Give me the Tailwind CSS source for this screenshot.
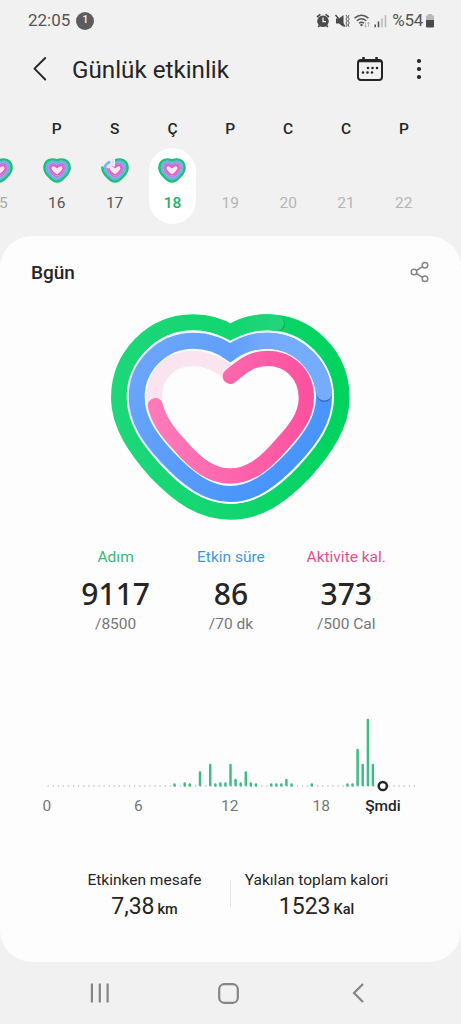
<!DOCTYPE html>
<html lang="tr">
<head>
<meta charset="utf-8">
<title>Günlük etkinlik</title>
<script src="https://cdn.jsdelivr.net/npm/@tailwindcss/browser@4"></script>
</head>
<body class="w-[461px] h-[1024px] overflow-hidden bg-[#f1f1f1] font-['Roboto',sans-serif] text-[#252525] flex flex-col">
<svg class="hidden">
  <symbol id="mini" viewBox="0 0 84 75">
    <path d="M42 7.500C37 5 31 4.500 27 4.500C13 4.500 4.500 16 4.500 29C4.500 40 10 47 17 54C26 64 34 70.500 42 70.500C50 70.500 58 64 67 54C74 47 79.500 40 79.500 29C79.500 16 71 4.500 57 4.500C53 4.500 47 5 42 7.500Z" fill="#fce9f5" stroke="#1cc077" stroke-width="8"/>
    <path d="M42 15C37 12 32 11 28 11C18 11 11.500 20 11.500 29.500C11.500 38 16 44 22 50C29 58 36 63.500 42 63.500C48 63.500 55 58 62 50C68 44 72.500 38 72.500 29.500C72.500 20 66 11 56 11C52 11 47 12 42 15Z" fill="none" stroke="#6fb0e4" stroke-width="7"/>
    <path d="M42 23C38 19 34 17 30 17C22 17 18 23 18 30C18 37 22 42 27 47C33 53 37 57 42 57C47 57 51 53 57 47C62 42 66 37 66 30C66 23 62 17 54 17C50 17 46 19 42 23Z" fill="none" stroke="#b383dc" stroke-width="6"/>
    <path d="M42 28C38 24 35 22 31 22C26 22 23 26 23 31C23 36 27 40 31 44C36 49 39 51 42 51C45 51 48 49 53 44C57 40 61 36 61 31C61 26 58 22 53 22C49 22 46 24 42 28Z" fill="none" stroke="#e25abb" stroke-width="5"/>
  </symbol>
</svg>

<!-- Status bar -->
<div class="h-10 flex items-center pt-px pl-[28px] pr-[26px] text-[#555] shrink-0">
  <span class="text-[17px] leading-none">22:05</span>
  <span class="ml-[6px] size-[18px] rounded-full bg-[#5c5c5c] text-[#f1f1f1] text-[11px] font-medium flex items-center justify-center">1</span>
  <div class="ml-auto flex items-center">
    <svg class="w-[74px] h-5 mr-[2px]" viewBox="0 0 74 20" fill="none">
      <circle cx="7" cy="10.3" r="5.8" fill="#4a4a4a"/>
      <path d="M1 6L4.4 3.4M13 6L9.6 3.4M3.4 14.4L2.2 16M10.6 14.4L11.8 16" stroke="#4a4a4a" stroke-width="1.6"/>
      <path d="M7 6.5V10.6H10" stroke="#f1f1f1" stroke-width="1.3"/>
      <path d="M20 7.500H23L27.500 4V16L23 12.500H20Z" fill="#4a4a4a"/>
      <path d="M19.500 4L29 15.500" stroke="#4a4a4a" stroke-width="1.500"/>
      <path d="M30 4l1.200 2-1.200 2 1.200 2-1.200 2 1.200 2-1 1.800M33 4l-1 2 1.200 2-1.200 2 1.200 2-1.200 2 1 1.800" stroke="#5a5a5a"/>
      <path d="M38.500 7.200Q45.500 1.500 52.500 7.200M40.800 9.800Q45.500 5.800 50.200 9.800M43 12.300Q45.500 10.200 48 12.300" stroke="#555" stroke-width="1.500"/>
      <circle cx="45.500" cy="14" r="1.200" fill="#555"/>
      <path d="M49.500 11.500V16M48.300 14.800l1.200 1.400 1.200-1.400M52.500 16V11.500M51.300 12.800l1.200-1.400 1.200 1.400" stroke="#aaa" stroke-width=".8"/>
      <path d="M59.200 16.200V13.500M62.500 16.200V10.500" stroke="#555" stroke-width="1.600"/>
      <path d="M66 16.200V7.500M69.500 16.200V4" stroke="#bbb" stroke-width="1.600"/>
    </svg>
    <span class="text-[17px] leading-none tracking-[-0.3px]">%54</span>
    <svg class="ml-[2px] w-[10px] h-[14px]" viewBox="0 0 10 14"><path d="M3 0H7V1.500H9V7H1V1.500H3Z" fill="#b9b9b9"/><path d="M1 6H9V12.500Q9 13.500 8 13.500H2Q1 13.500 1 12.500Z" fill="#4a4a4a"/></svg>
  </div>
</div>

<!-- App bar -->
<div class="h-[60px] flex items-center pl-8 pr-[36px] shrink-0">
  <svg class="w-4 h-[26px] -mt-[2px]" viewBox="0 0 16 26" fill="none" stroke="#252525" stroke-width="1.900" stroke-linecap="round" stroke-linejoin="round"><path d="M13.200 2L2.500 12.700L13.200 23.500"/></svg>
  <h1 class="ml-6 mt-px text-[24.200px] leading-none">Günlük etkinlik</h1>
  <svg class="ml-auto -mt-[2px] w-[28px] h-[26px]" viewBox="0 0 28 26" fill="none" stroke="#252525">
    <rect x="2" y="4" width="24" height="20" rx="3" stroke-width="2"/>
    <path d="M3 5H25M7.500 1V4M20.500 1V4" stroke-width="2.500"/>
    <path d="M12 12h.01M16.500 12h.01M21 12h.01M7 16.500h.01M11.500 16.500h.01M16 16.500h.01" stroke-width="2.600" stroke-linecap="round"/>
  </svg>
  <svg class="ml-[29px] -mt-[2px] w-3 h-6" viewBox="0 0 12 24" fill="#252525"><circle cx="6" cy="4" r="2.100"/><circle cx="6" cy="12" r="2.100"/><circle cx="6" cy="20" r="2.100"/></svg>
</div>

<!-- Week strip -->
<div class="h-[136px] w-[463px] -ml-[30px] pt-[21px] grid grid-cols-[repeat(8,57.850px)] text-center text-[15.500px] leading-4 shrink-0">
  <div class="flex flex-col items-center"><b class="h-4"></b><svg class="mt-[21px] w-7 h-[25px]"><use href="#mini"/></svg><span class="mt-[12px] text-[#a9a9a9]">15</span></div>
  <div class="flex flex-col items-center"><b class="h-4 font-medium">P</b><svg class="mt-[21px] w-7 h-[25px]"><use href="#mini"/></svg><span class="mt-[12px] text-[#555]">16</span></div>
  <div class="flex flex-col items-center"><b class="h-4 font-medium">S</b><svg class="mt-[21px] w-7 h-[25px]" viewBox="0 0 84 75"><use href="#mini" width="84" height="75"/><path d="M-2 24L8 4L30 -2L42 0V26L32 24L24 30L14 28Z" fill="#f1f1f1"/><path d="M10 30Q13 17 28 11" stroke="#7fb4e6" stroke-width="8" fill="none"/><path d="M20 31Q23 20 33 18M36 3V22" stroke="#dce6ee" stroke-width="6" fill="none"/></svg><span class="mt-[12px] text-[#555]">17</span></div>
  <div class="flex flex-col items-center"><b class="h-4 font-medium">Ç</b><div class="mt-[11px] w-[47px] h-[76px] rounded-full bg-white flex flex-col items-center"><svg class="mt-[10px] w-7 h-[25px]"><use href="#mini"/></svg><span class="mt-[12px] text-[#25ad70] font-medium">18</span></div></div>
  <div class="flex flex-col items-center"><b class="h-4 font-medium">P</b><span class="mt-[58px] text-[#b5b5b5]">19</span></div>
  <div class="flex flex-col items-center"><b class="h-4 font-medium">C</b><span class="mt-[58px] text-[#b5b5b5]">20</span></div>
  <div class="flex flex-col items-center"><b class="h-4 font-medium">C</b><span class="mt-[58px] text-[#b5b5b5]">21</span></div>
  <div class="flex flex-col items-center"><b class="h-4 font-medium">P</b><span class="mt-[58px] text-[#b5b5b5]">22</span></div>
</div>

<!-- Daily card -->
<main class="h-[726px] rounded-[32px] bg-[#fdfdfd] shrink-0 flex flex-col">
  <div class="h-16 pt-[7px] pl-[31px] pr-[31px] flex items-center justify-between shrink-0">
    <h2 class="mt-[2px] text-[19px] font-medium leading-none">Bgün</h2>
    <svg class="w-5 h-[22px]" viewBox="0 0 20 22" fill="none" stroke="#858585" stroke-width="1.500"><circle cx="4" cy="11" r="2.800"/><circle cx="15" cy="4.200" r="2.800"/><circle cx="15" cy="17.800" r="2.800"/><path d="M6.400 9.500L12.600 5.700M6.400 12.500L12.600 16.300"/></svg>
  </div>
  <svg class="ml-[100px] w-[260px] h-[230px] shrink-0" viewBox="0 0 780 690" fill="none" stroke-width="48">
    <defs>
      <linearGradient id="g" x1="0" x2="1"><stop stop-color="#1dd779"/><stop offset=".5" stop-color="#12d66f"/><stop offset="1" stop-color="#00d35e"/></linearGradient>
      <linearGradient id="g2" gradientUnits="userSpaceOnUse" x1="391" y1="0" x2="540" y2="0"><stop stop-color="#1bd578" stop-opacity="0"/><stop offset=".5" stop-color="#1bd578"/><stop offset="1" stop-color="#20d57b"/></linearGradient>
      <linearGradient id="b" x1="0" y1="0" x2="1" y2=".7"><stop stop-color="#6fa7fb"/><stop offset="1" stop-color="#4593fb"/></linearGradient>
      <linearGradient id="b2" gradientUnits="userSpaceOnUse" x1="385" y1="0" x2="560" y2="0"><stop stop-color="#69a4fb" stop-opacity="0"/><stop offset=".5" stop-color="#70a8fc"/><stop offset="1" stop-color="#76acfd"/></linearGradient>
      <linearGradient id="p"><stop stop-color="#ff7ab9"/><stop offset="1" stop-color="#fb529f"/></linearGradient>
    </defs>
    <path d="M391 98C360 78 325 67 280 67C155 67 57 170 57 294C57 375 110 450 168 515C240 590 305 635 391 635C477 635 542 590 614 515C672 450 725 375 725 294C725 170 627 67 502 67C457 67 422 78 391 98Z" stroke="url(#g)"/>
    <circle cx="532" cy="72" r="22.500" fill="#078b48" opacity=".65"/>
    <path d="M391 98C422 78 457 67 502 67Q517 67 528 69" stroke="url(#g2)"/>
    <circle cx="528" cy="69.500" r="24" fill="#20d57b"/>
    <path d="M391 158C358 134 322 122 280 122C186 122 110 200 110 291C110 360 150 415 200 470C265 540 325 582 391 582C457 582 517 540 582 470C632 415 672 360 672 291C672 200 596 122 502 122C460 122 424 134 391 158Z" stroke="#f1fdff" stroke-width="60"/>
    <path d="M391 158C358 134 322 122 280 122C186 122 110 200 110 291C110 360 150 415 200 470C265 540 325 582 391 582C457 582 517 540 582 470C632 415 672 360 672 291C672 200 596 122 502 122C460 122 424 134 391 158Z" stroke="url(#b)"/>
    <circle cx="673" cy="283" r="22.500" fill="#28589f" opacity=".7"/>
    <path d="M391 158C424 134 460 122 502 122C587 122 659 188 673 278" stroke="url(#b2)"/>
    <circle cx="673" cy="278" r="23.500" fill="#76acfd"/>
    <path d="M166 317C150 240 200 175 280 175C325 175 360 196 391 220" stroke="#fae4f0" stroke-width="46"/>
    <path d="M391 229C425 200 455 175 502 175C570 175 619 225 619 293C619 345 590 385 544 434C492 495 447 528 391 528C335 528 290 495 238 434C205 400 175 360 166 317" stroke="url(#p)" stroke-width="46" stroke-linecap="round"/>
  </svg>

  <div class="ml-[58px] grid grid-cols-[repeat(3,115.300px)] text-center text-[15.500px] leading-5 pt-[17px] shrink-0">
    <div><div class="text-[#35b97c]">Adım</div><div class="mt-[9px] text-[30px] leading-9 font-medium font-['Noto_Sans',sans-serif]">9117</div><div class="mt-[2px] text-[#777]">/8500</div></div>
    <div><div class="text-[#3f98dd]">Etkin süre</div><div class="mt-[9px] text-[30px] leading-9 font-medium font-['Noto_Sans',sans-serif]">86</div><div class="mt-[2px] text-[#777]">/70 dk</div></div>
    <div><div class="text-[#dc528f]">Aktivite kal.</div><div class="mt-[9px] text-[30px] leading-9 font-medium font-['Noto_Sans',sans-serif]">373</div><div class="mt-[2px] text-[#777]">/500 Cal</div></div>
  </div>

  <!-- Hourly steps -->
  <svg class="mt-[72px] w-[461px] h-[86px] shrink-0" viewBox="0 706 461 86" fill="none">
    <path d="M47.500 786H416" stroke="#c4c4c4" stroke-width="1.300" stroke-dasharray="1.300 3.787"/>
    <path d="M174.500 784.500V785.500M184.700 783.500V785.500M189.700 784.500V785.500M200 772.500V785M210.200 765V785M215.300 784.500V785.500M220.400 783.500V785.500M225.400 783.500V785.500M230.500 765V785M235.600 780V785M240.700 783.500V785.500M245.800 772.500V785M250.800 783.500V785.500M255.900 784.500V785.500M271.200 784.500V785.500M276.300 784.500V785.500M281.300 784.500V785.500M286.400 780V785M291.500 784.500V785.500M311.800 784.500V785.500M347.400 784.500V785.500M352.500 784.500V785.500M357.600 750V785M362.700 765V785M367.900 720V785M372.900 765V785" stroke="#3ebd83" stroke-width="2.500" stroke-linecap="round"/>
    <circle cx="382.800" cy="786" r="4.100" fill="#fff" stroke="#252525" stroke-width="2.500"/>
  </svg>
  <div class="mt-[4px] ml-[1px] grid grid-cols-[91.500px_91.500px_91.500px_91.500px_32px] text-center text-[15.500px] leading-5 text-[#777] shrink-0">
    <span>0</span><span>6</span><span>12</span><span>18</span><span class="-ml-[15px] w-[62px] font-medium text-[#252525]">Şmdi</span>
  </div>

  <!-- Totals -->
  <div class="mt-[54px] flex justify-center text-center shrink-0">
    <div class="w-[171px]"><div class="text-[15.500px] leading-5">Etkinken mesafe</div><div class="mt-[3px] leading-7 text-[23px]">7,38<span class="ml-[3px] text-[14.500px] font-medium">km</span></div></div>
    <div class="w-px h-[27px] mt-[10px] bg-[#e4e4e4]"></div>
    <div class="w-[171px]"><div class="text-[15.500px] leading-5">Yakılan toplam kalori</div><div class="mt-[3px] leading-7 text-[23px]">1523<span class="ml-[3px] text-[14.500px] font-medium">Kal</span></div></div>
  </div>
</main>

<!-- Navigation bar -->
<nav class="flex-1 flex items-center justify-between pl-[90px] pr-[97px] text-[#858585]">
  <svg class="w-5 h-5" viewBox="0 0 20 20" stroke="currentColor" stroke-width="2.200"><path d="M1.900 .5V19.500M9.800 .5V19.500M17.600 .5V19.500"/></svg>
  <svg class="w-[21px] h-[21px] -ml-[5px]" viewBox="0 0 21 21" fill="none" stroke="currentColor" stroke-width="2.200"><rect x="1.200" y="1.200" width="18.600" height="18.600" rx="5"/></svg>
  <svg class="w-3 h-5" viewBox="0 0 12 20" fill="none" stroke="currentColor" stroke-width="2.200"><path d="M11 1L2 10L11 19"/></svg>
</nav>
</body>
</html>
